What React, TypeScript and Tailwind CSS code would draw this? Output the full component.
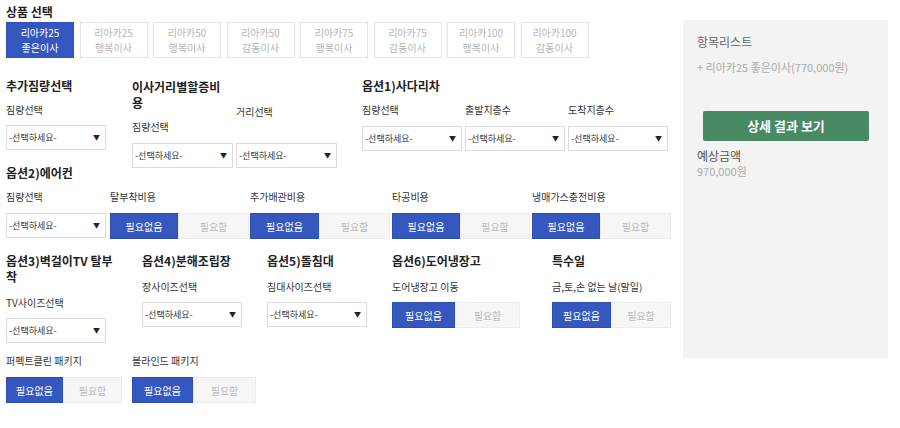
const font = { fontFamily: '"Noto Sans CJK KR", "Noto Sans", sans-serif' };

const products = [
  ["리아카25", "좋은이사"],
  ["리아카25", "행복이사"],
  ["리아카50", "행복이사"],
  ["리아카50", "감동이사"],
  ["리아카75", "행복이사"],
  ["리아카75", "감동이사"],
  ["리아카100", "행복이사"],
  ["리아카100", "감동이사"],
];

const Title = ({ children, className = "" }: { children: React.ReactNode; className?: string }) => (
  <h3 className={`text-[12px] font-bold leading-[14px] text-[#222] ${className}`}>{children}</h3>
);

const Label = ({ children, className = "" }: { children: React.ReactNode; className?: string }) => (
  <div className={`text-[10px] leading-[14px] text-[#333] whitespace-nowrap ${className}`}>{children}</div>
);

const Select = ({ className = "" }: { className?: string }) => (
  <div
    className={`flex h-[25px] w-[100px] items-center justify-between border border-[#dcdcdc] bg-white pl-[2px] pr-[5px] text-[9px] text-[#333] ${className}`}
  >
    <span>-선택하세요-</span>
    <span className="text-[7px] text-[#222]">▼</span>
  </div>
);

const Toggle = ({ on, off, className = "" }: { on: string; off: string; className?: string }) => (
  <div className={`flex h-[26px] ${className}`}>
    <div className={`flex items-center justify-center border border-[#2f4fb0] bg-[#3558c0] text-[10px] text-white ${on}`}>
      필요없음
    </div>
    <div className={`flex items-center justify-center border border-[#ececec] bg-[#f6f6f6] text-[10px] text-[#bbb] ${off}`}>
      필요함
    </div>
  </div>
);

export default function App() {
  return (
    <div className="flex h-[428px] w-[900px] bg-white" style={font}>
      <div className="w-[683px] shrink-0 pl-[6px] pt-[5px]">
        <Title>상품 선택</Title>
        <div className="mt-[3px] flex gap-[5.5px]">
          {products.map(([a, b], i) => (
            <div
              key={i}
              className={`flex h-[36px] w-[68px] flex-col items-center justify-center text-[10px] leading-[15px] ${
                i === 0
                  ? "border border-[#2e4fb3] bg-[#3558c0] text-white"
                  : "border border-[#e2e2e2] bg-white text-[#b5b5b5]"
              }`}
            >
              <span>{a}</span>
              <span>{b}</span>
            </div>
          ))}
        </div>

        {/* row 1 */}
        <div className="mt-[21px] flex h-[87px]">
          <div className="w-[126px]">
            <Title>추가짐량선택</Title>
            <Label className="mt-[10px]">짐량선택</Label>
            <Select className="mt-[8px]" />
          </div>
          <div className="flex w-[230px]">
            <div className="w-[104px]">
              <Title className="leading-[16px]">
                이사거리별할증비
                <br />용
              </Title>
              <Label className="mt-[9px]">짐량선택</Label>
              <Select className="mt-[9px] w-[101px]" />
            </div>
            <div>
              <Label className="mt-[26px]">거리선택</Label>
              <Select className="mt-[24px] w-[101px]" />
            </div>
          </div>
          <div>
            <Title>옵션1)사다리차</Title>
            <div className="flex gap-[3px]">
              {["짐량선택", "출발지층수", "도착지층수"].map((l) => (
                <div key={l} className="w-[100px]">
                  <Label className="mt-[10px]">{l}</Label>
                  <Select className="mt-[9px]" />
                </div>
              ))}
            </div>
          </div>
        </div>

        {/* row 2 */}
        <div>
          <Title>옵션2)에어컨</Title>
          <div className="mt-[10px] flex">
            <div className="w-[104px]">
              <Label>짐량선택</Label>
              <Select className="mt-[9px]" />
            </div>
            <div className="w-[140px]">
              <Label>탈부착비용</Label>
              <Toggle className="mt-[9px] h-[25px]" on="w-[68px]" off="w-[71px]" />
            </div>
            <div className="w-[142px]">
              <Label>추가배관비용</Label>
              <Toggle className="mt-[9px] h-[25px]" on="w-[69px]" off="w-[71px]" />
            </div>
            <div className="w-[140px]">
              <Label>타공비용</Label>
              <Toggle className="mt-[9px] h-[25px]" on="w-[68px]" off="w-[70px]" />
            </div>
            <div className="w-[140px]">
              <Label>냉매가스충전비용</Label>
              <Toggle className="mt-[9px] h-[25px]" on="w-[68px]" off="w-[71px]" />
            </div>
          </div>
        </div>

        {/* row 3 */}
        <div className="mt-[14px] flex">
          <div className="w-[136px]">
            <Title className="leading-[16px]">
              옵션3)벽걸이TV 탈부
              <br />착
            </Title>
            <Label className="mt-[11px]">TV사이즈선택</Label>
            <Select className="mt-[8px]" />
          </div>
          <div className="w-[125px]">
            <Title className="leading-[16px]">옵션4)분해조립장</Title>
            <Label className="mt-[11px]">장사이즈선택</Label>
            <Select className="mt-[8px]" />
          </div>
          <div className="w-[125px]">
            <Title className="leading-[16px]">옵션5)돌침대</Title>
            <Label className="mt-[11px]">침대사이즈선택</Label>
            <Select className="mt-[8px]" />
          </div>
          <div className="w-[160px]">
            <Title className="leading-[16px]">옵션6)도어냉장고</Title>
            <Label className="mt-[11px]">도어냉장고 이동</Label>
            <Toggle className="mt-[8px] h-[25px]" on="w-[63px]" off="w-[65px]" />
          </div>
          <div>
            <Title className="leading-[16px]">특수일</Title>
            <Label className="mt-[11px]">금,토,손 없는 날(말일)</Label>
            <Toggle className="mt-[8px] h-[25px]" on="w-[59px]" off="w-[60px]" />
          </div>
        </div>

        {/* row 4 */}
        <div className="mt-[11px] flex">
          <div className="w-[126px]">
            <Label>퍼펙트클린 패키지</Label>
            <Toggle className="mt-[9px]" on="w-[57px]" off="w-[59px]" />
          </div>
          <div>
            <Label>블라인드 패키지</Label>
            <Toggle className="mt-[9px]" on="w-[61px]" off="w-[63px]" />
          </div>
        </div>
      </div>

      <aside className="mt-[20px] h-[338px] w-[205px] bg-[#f3f3f3] pl-[14px] pt-[13px]">
        <div className="text-[12px] leading-[17px] text-[#666]">항목리스트</div>
        <div className="mt-[10px] text-[11px] leading-[15px] text-[#aaa]">+ 리아카25 좋은이사(770,000원)</div>
        <button className="ml-[6px] mt-[36px] flex h-[30px] w-[166px] items-center justify-center rounded-[2px] bg-[#478a63] text-[13px] font-bold text-white">
          상세 결과 보기
        </button>
        <div className="mt-[7px] text-[12px] leading-[16px] text-[#555]">예상금액</div>
        <div className="text-[11px] leading-[15px] text-[#aaa]">970,000원</div>
      </aside>
    </div>
  );
}
